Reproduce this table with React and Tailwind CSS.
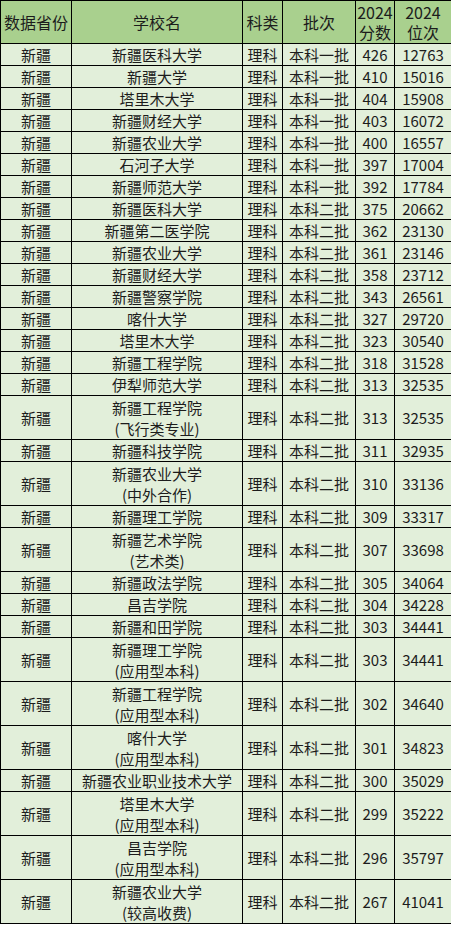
import React from 'react';

const rows = [
  ['新疆医科大学', null, '本科一批', 426, 12763],
  ['新疆大学', null, '本科一批', 410, 15016],
  ['塔里木大学', null, '本科一批', 404, 15908],
  ['新疆财经大学', null, '本科一批', 403, 16072],
  ['新疆农业大学', null, '本科一批', 400, 16557],
  ['石河子大学', null, '本科一批', 397, 17004],
  ['新疆师范大学', null, '本科一批', 392, 17784],
  ['新疆医科大学', null, '本科二批', 375, 20662],
  ['新疆第二医学院', null, '本科二批', 362, 23130],
  ['新疆农业大学', null, '本科二批', 361, 23146],
  ['新疆财经大学', null, '本科二批', 358, 23712],
  ['新疆警察学院', null, '本科二批', 343, 26561],
  ['喀什大学', null, '本科二批', 327, 29720],
  ['塔里木大学', null, '本科二批', 323, 30540],
  ['新疆工程学院', null, '本科二批', 318, 31528],
  ['伊犁师范大学', null, '本科二批', 313, 32535],
  ['新疆工程学院', '(飞行类专业)', '本科二批', 313, 32535],
  ['新疆科技学院', null, '本科二批', 311, 32935],
  ['新疆农业大学', '(中外合作)', '本科二批', 310, 33136],
  ['新疆理工学院', null, '本科二批', 309, 33317],
  ['新疆艺术学院', '(艺术类)', '本科二批', 307, 33698],
  ['新疆政法学院', null, '本科二批', 305, 34064],
  ['昌吉学院', null, '本科二批', 304, 34228],
  ['新疆和田学院', null, '本科二批', 303, 34441],
  ['新疆理工学院', '(应用型本科)', '本科二批', 303, 34441],
  ['新疆工程学院', '(应用型本科)', '本科二批', 302, 34640],
  ['喀什大学', '(应用型本科)', '本科二批', 301, 34823],
  ['新疆农业职业技术大学', null, '本科二批', 300, 35029],
  ['塔里木大学', '(应用型本科)', '本科二批', 299, 35222],
  ['昌吉学院', '(应用型本科)', '本科二批', 296, 35797],
  ['新疆农业大学', '(较高收费)', '本科二批', 267, 41041],
];

const cell = 'border border-black text-center align-middle p-0';

export default function App() {
  return (
    <div
      className="w-[451px] bg-white text-[#1c1c1c]"
      style={{ fontFamily: '"Noto Sans CJK SC", "Noto Sans", sans-serif' }}
    >
      <table className="table-fixed border-collapse w-[451px] text-[15px] leading-[21px] bg-[#e2efda]">
        <colgroup>
          <col className="w-[71px]" />
          <col className="w-[171px]" />
          <col className="w-[40px]" />
          <col className="w-[73px]" />
          <col className="w-[39px]" />
          <col className="w-[57px]" />
        </colgroup>
        <thead>
          <tr className="h-[43px] bg-[#a9d08e] text-[16px] leading-[20px]">
            <th className={`${cell} font-normal`}>数据省份</th>
            <th className={`${cell} font-normal`}>学校名</th>
            <th className={`${cell} font-normal`}>科类</th>
            <th className={`${cell} font-normal`}>批次</th>
            <th className={`${cell} font-normal`}>2024<br />分数</th>
            <th className={`${cell} font-normal`}>2024<br />位次</th>
          </tr>
        </thead>
        <tbody>
          {rows.map(([name, sub, batch, score, rank], i) => (
            <tr key={i} className={sub ? 'h-[44px]' : 'h-[21px]'}>
              <td className={cell}>新疆</td>
              <td className={cell}>
                {name}
                {sub && <><br />{sub}</>}
              </td>
              <td className={cell}>理科</td>
              <td className={cell}>{batch}</td>
              <td className={cell}>{score}</td>
              <td className={cell}>{rank}</td>
            </tr>
          ))}
        </tbody>
      </table>
    </div>
  );
}
